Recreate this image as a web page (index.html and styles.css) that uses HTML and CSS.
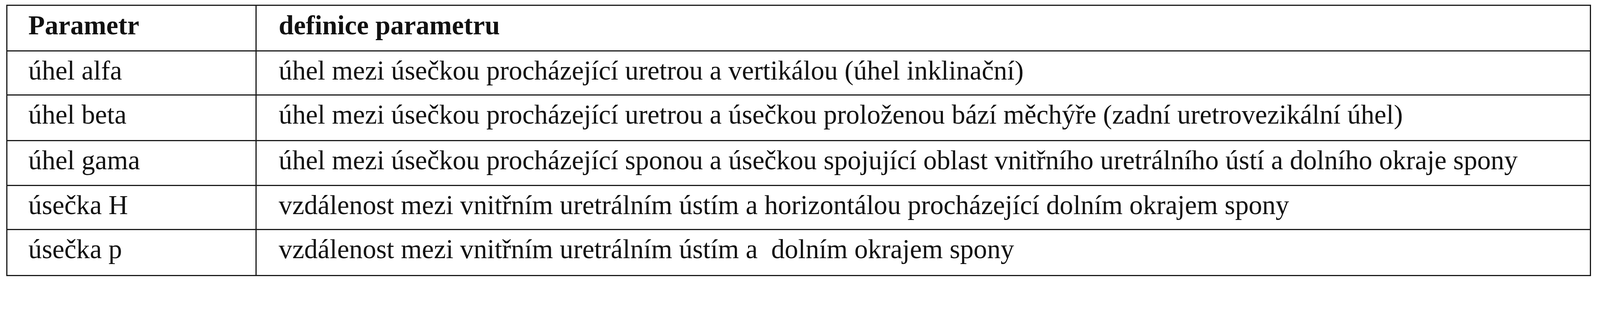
FILE: index.html
```html
<!DOCTYPE html>
<html lang="cs">
<head>
<meta charset="utf-8">
<title>Parametry</title>
<link rel="stylesheet" href="styles.css">
</head>
<body>
<div class="params" role="table">
  <div class="cell head" role="columnheader">Parametr</div>
  <div class="cell head last" role="columnheader">definice parametru</div>

  <div class="cell" role="cell">úhel alfa</div>
  <div class="cell last" role="cell">úhel mezi úsečkou procházející uretrou a vertikálou (úhel inklinační)</div>

  <div class="cell" role="cell">úhel beta</div>
  <div class="cell last" role="cell">úhel mezi úsečkou procházející uretrou a úsečkou proloženou bází měchýře (zadní uretrovezikální úhel)</div>

  <div class="cell" role="cell">úhel gama</div>
  <div class="cell last" role="cell">úhel mezi úsečkou procházející sponou a úsečkou spojující oblast vnitřního uretrálního ústí a dolního okraje spony</div>

  <div class="cell" role="cell">úsečka H</div>
  <div class="cell last" role="cell">vzdálenost mezi vnitřním uretrálním ústím a horizontálou procházející dolním okrajem spony</div>

  <div class="cell bottom" role="cell">úsečka p</div>
  <div class="cell last bottom" role="cell">vzdálenost mezi vnitřním uretrálním ústím a &nbsp;dolním okrajem spony</div>
</div>
</body>
</html>
```
FILE: styles.css
```css
html, body {
  margin: 0;
  padding: 0;
  background: #ffffff;
}

body {
  padding: 11.6px 0 0 16.2px;
  font-family: "Liberation Serif", "Times New Roman", serif;
  color: #111111;
}

.params {
  display: grid;
  grid-template-columns: 638px 1fr;
  grid-template-rows: 117.3px 113.6px 116.4px 115.5px 112.7px 114.5px;
  width: 4057px;
  box-sizing: border-box;
  border: 3px solid #1a1a1a;
}

.cell {
  box-sizing: border-box;
  border-bottom: 3px solid #1a1a1a;
  border-right: 3px solid #1a1a1a;
  padding: 9px 0 0 53.4px;
  font-size: 69.1px;
  line-height: 79px;
  white-space: nowrap;
}

.cell.last {
  border-right: 0;
  padding-left: 56.4px;
}

.cell.bottom {
  border-bottom: 0;
}

.cell.head {
  font-weight: bold;
  padding-top: 10px;
}
```
